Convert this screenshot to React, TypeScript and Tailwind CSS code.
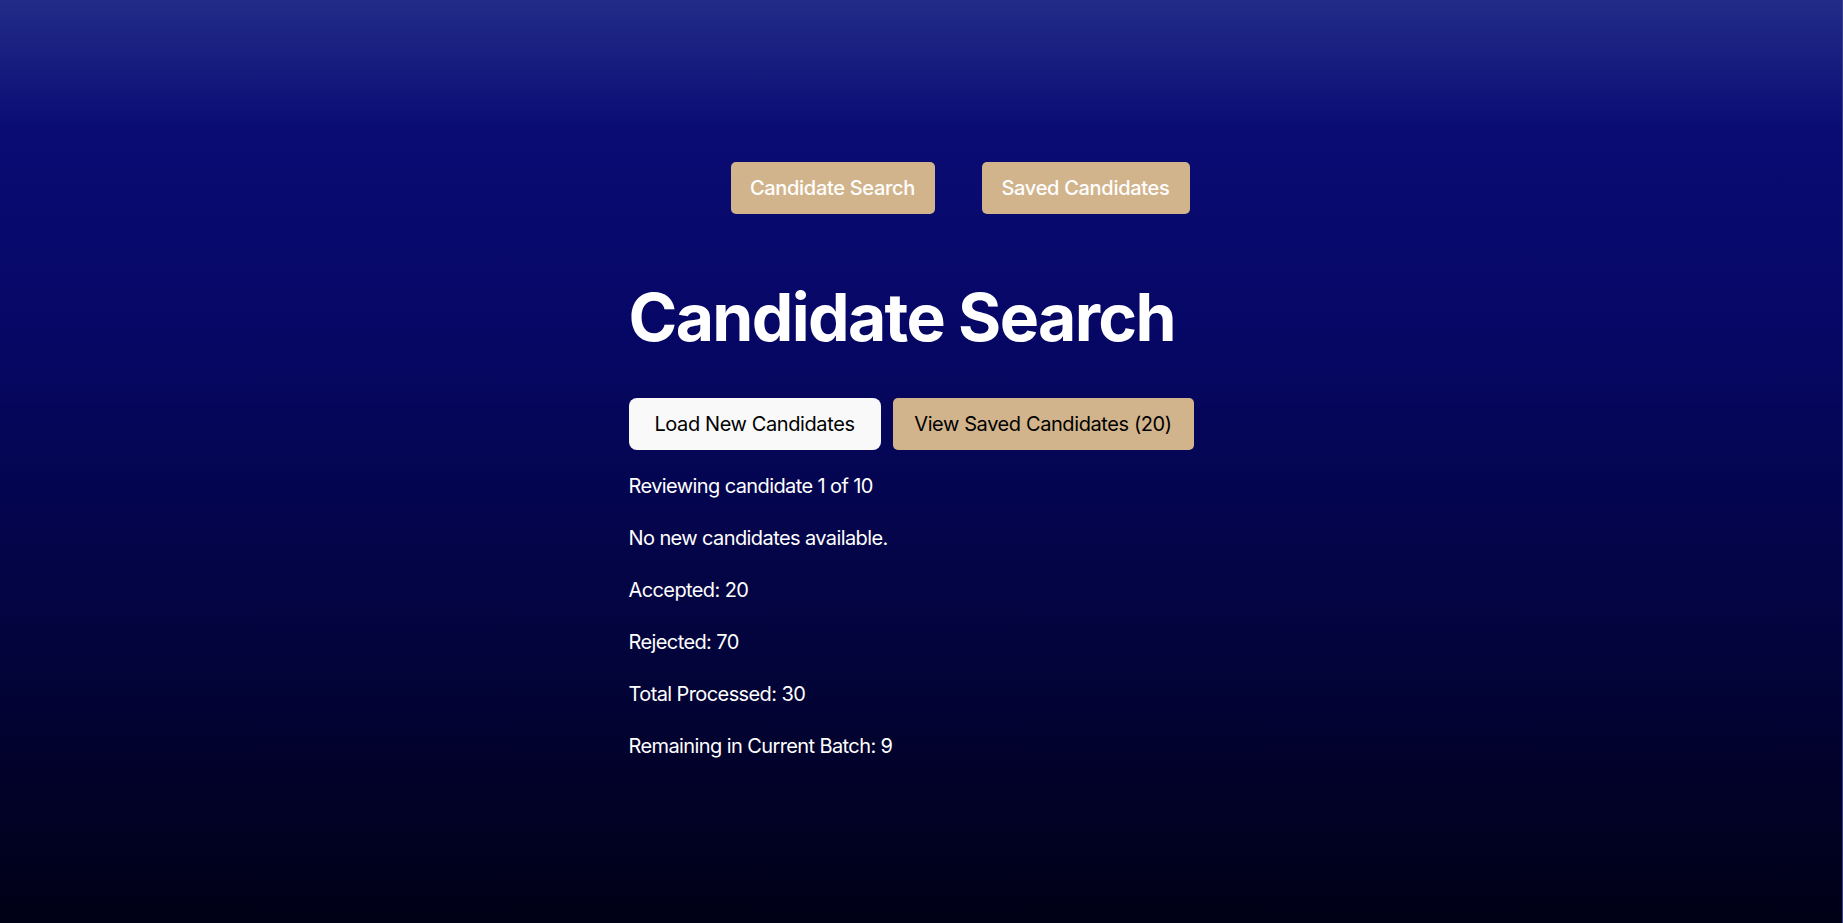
import React from 'react';

const stats = [
  'Reviewing candidate 1 of 10',
  'No new candidates available.',
  'Accepted: 20',
  'Rejected: 70',
  'Total Processed: 30',
  'Remaining in Current Batch: 9',
];

const App: React.FC = () => {
  return (
    <div
      className="min-h-screen w-full bg-[linear-gradient(to_bottom,#222c88_0%,#0a0c74_14%,#060766_35%,#03043c_70%,#000016_100%)] border-r border-[#3a3f8a] font-['Inter',sans-serif] text-white"
    >
      <nav className="flex justify-center gap-[47px] pt-[162px] pl-[78px]">
        <a className="flex h-[52px] w-[204px] items-center justify-center rounded-[5px] bg-[#d2b48c] text-xl font-medium tracking-[-0.015em] text-white">
          Candidate Search
        </a>
        <a className="flex h-[52px] w-[208px] items-center justify-center rounded-[5px] bg-[#d2b48c] text-xl font-medium tracking-[-0.015em] text-white">
          Saved Candidates
        </a>
      </nav>

      <main className="mx-auto w-[585px] pt-[63px]">
        <h1 className="text-[66px] font-bold leading-[80px] tracking-[-0.025em]">Candidate Search</h1>

        <div className="mt-[41px] flex gap-3">
          <button className="h-[52px] w-[252px] rounded-lg bg-[#f9f9f9] text-xl tracking-[-0.02em] text-black">
            Load New Candidates
          </button>
          <button className="h-[52px] w-[301px] rounded-[5px] bg-[#d2b48c] text-xl tracking-[-0.02em] text-black">
            View Saved Candidates (20)
          </button>
        </div>

        <div className="mt-5 flex flex-col gap-5">
          {stats.map((line) => (
            <p key={line} className="text-xl leading-8 tracking-[-0.03em]">
              {line}
            </p>
          ))}
        </div>
      </main>
    </div>
  );
};

export default App;
